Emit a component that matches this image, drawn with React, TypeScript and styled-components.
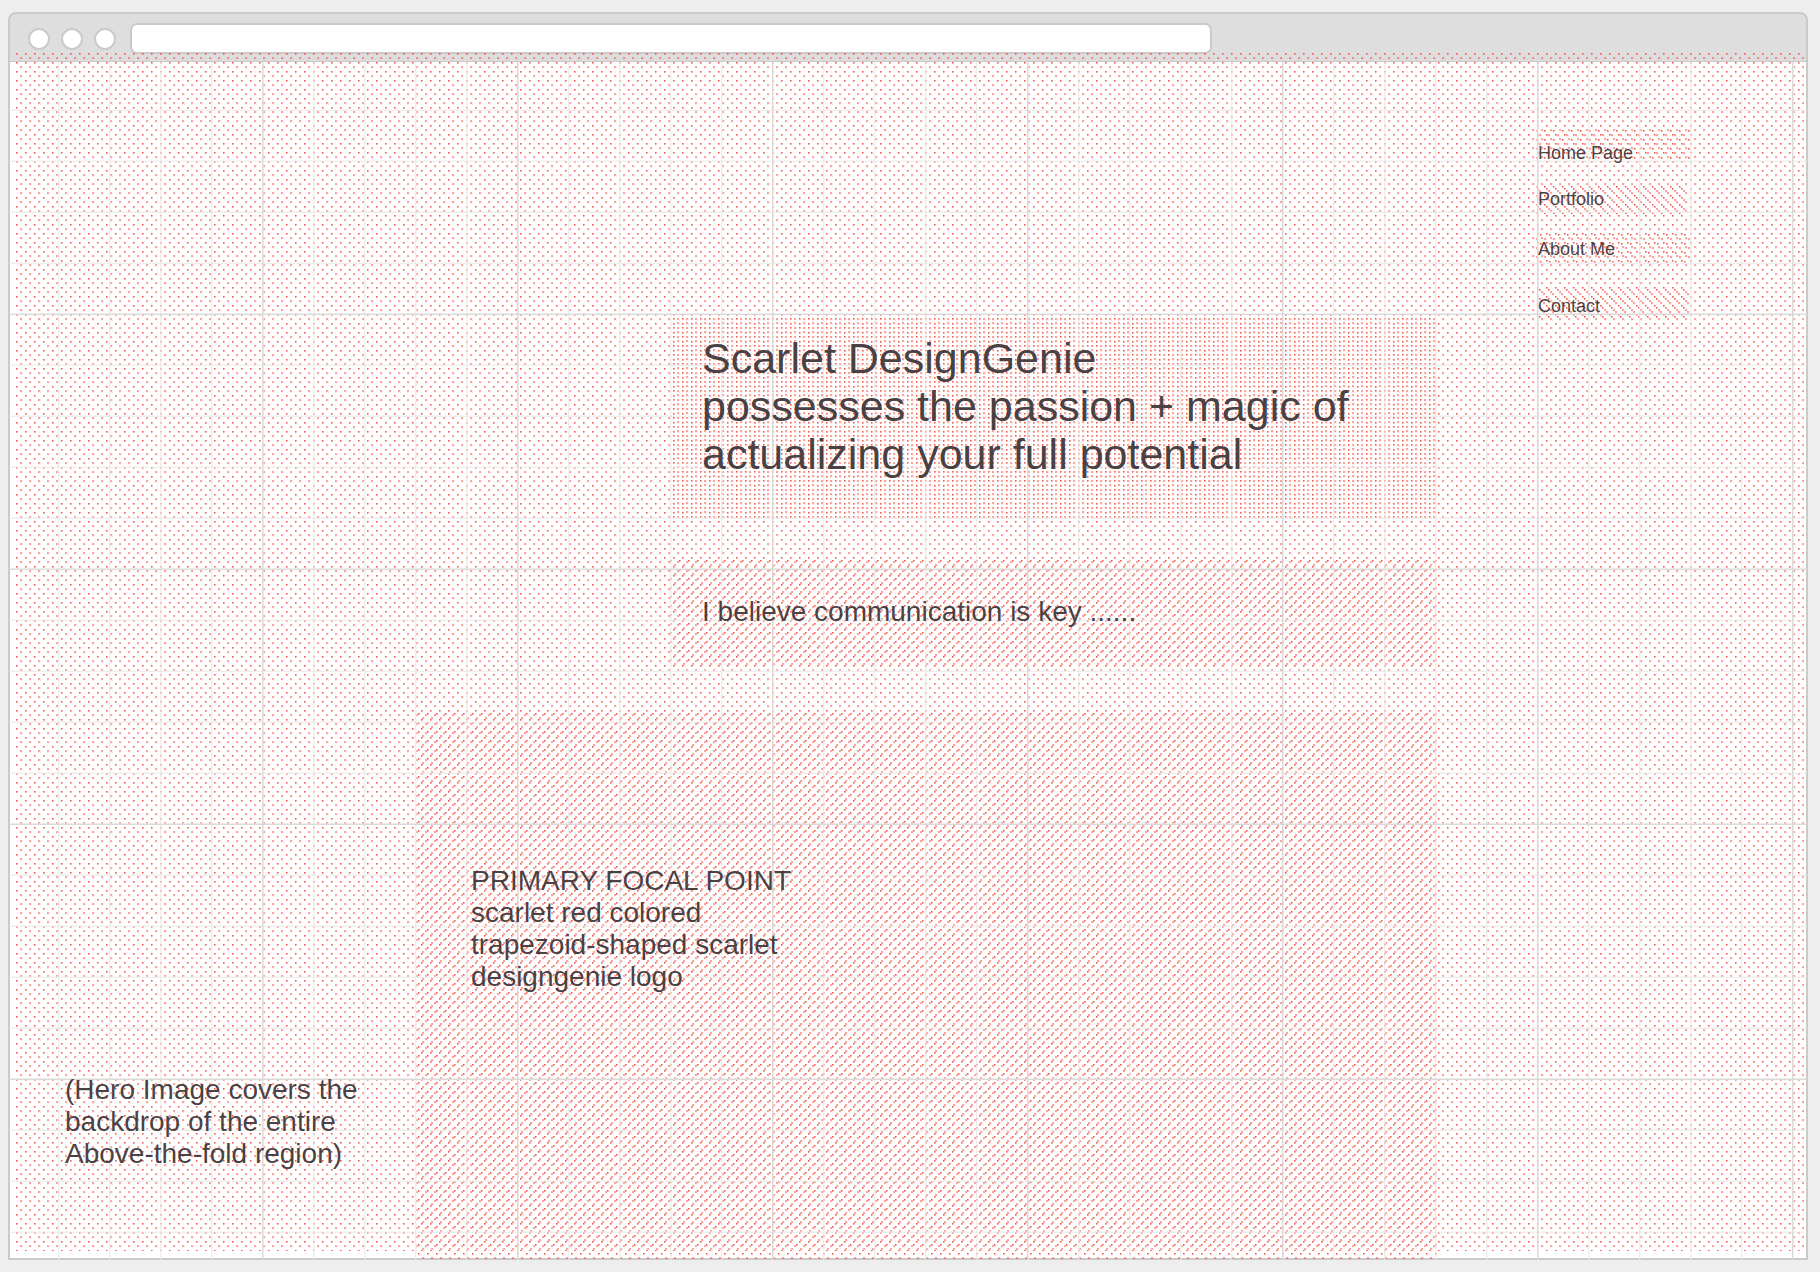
import React from "react";
import styled, { createGlobalStyle, css } from "styled-components";

const GlobalStyle = createGlobalStyle`
  *, *::before, *::after { box-sizing: border-box; }
  html, body { margin: 0; padding: 0; }
  body {
    background: #eeeeee;
    color: rgba(62, 54, 56, 0.94);
    font-family: "Liberation Sans", Arial, sans-serif;
  }
`;

/* Spots of the screen tone inside a 9px tile: alpha, left, top, size */
const spots = [
  [0.85, 0, 0, 1],
  [0.45, 1, 0, 1],
  [0.5, 0, 1, 1],
  [0.3, 1, 1, 1],
  [0.4, 4, 4, 2],
  [0.07, 4, 4, 3],
];

/* Tiles are anchored to the window, so overlapping tones keep their phase */
const tone = (x: number, y: number) => {
  const rects = spots
    .map(
      ([alpha, left, top, size]) =>
        `<rect x='${left}' y='${top}' width='${size}' height='${size}' fill='rgba(240,58,40,${alpha})'/>`
    )
    .join("");
  const svg = `<svg xmlns='http://www.w3.org/2000/svg' width='9' height='9' shape-rendering='crispEdges'>${rects}</svg>`;
  return css`
    background-image: url("data:image/svg+xml,${encodeURIComponent(svg)}");
    background-size: 9px 9px;
    background-position: ${7 + x}px ${8 + y}px;
    background-attachment: fixed;
  `;
};

const Browser = styled.div`
  display: flex;
  flex-direction: column;
  min-height: calc(100vh - 24px);
  margin: 12px 12px 12px 8px;
`;

const Toolbar = styled.header`
  display: flex;
  align-items: center;
  gap: 11px;
  height: 50px;
  padding: 3px 18px 0;
  background: #dedede;
  border: 2px solid #cacaca;
  border-bottom-width: 1px;
  border-radius: 8px 8px 0 0;
`;

const WindowButton = styled.button`
  flex: none;
  width: 22px;
  height: 22px;
  padding: 0;
  background: #ffffff;
  border: 2px solid #cacaca;
  border-radius: 50%;
`;

const AddressBar = styled.input`
  width: 61.5%;
  height: 31px;
  margin: 0 0 2px 3px;
  padding: 0 12px;
  background: #ffffff;
  border: 2px solid #cacaca;
  border-radius: 7px;
  font: inherit;
  font-size: 18px;
  outline: none;
`;

const Viewport = styled.div`
  position: relative;
  flex: 1;
  display: grid;
  grid-template-columns: 407fr 1020fr 369fr;
  background: #ffffff;
  border: 2px solid #cacaca;
  border-top: 0;

  &::before {
    content: "";
    position: absolute;
    inset: -9px 2px 7px 6px;
    ${tone(0, 0)}
    pointer-events: none;
  }

  &::after {
    content: "";
    position: absolute;
    inset: 0 -1px -2px -1px;
    background-image:
      linear-gradient(90deg, rgba(212, 212, 212, 0.75) 1px, rgba(220, 220, 220, 0.4) 1px 2px, transparent 2px),
      linear-gradient(rgba(220, 220, 220, 0.4) 1px, rgba(212, 212, 212, 0.75) 1px 2px, transparent 2px),
      linear-gradient(90deg, rgba(232, 232, 232, 0.7) 1px, rgba(236, 236, 236, 0.4) 1px 2px, transparent 2px),
      linear-gradient(rgba(236, 236, 236, 0.4) 1px, rgba(232, 232, 232, 0.7) 1px 2px, transparent 2px);
    background-size: 255px 255px, 255px 255px, 51px 51px, 51px 51px;
    background-position: 7px 0, 0 58px, 7px 0, 0 7px;
    background-attachment: fixed;
    pointer-events: none;
  }
`;

const Text = styled.p`
  position: relative;
  z-index: 1;
  margin: 0;
  font-size: 28px;
  line-height: 32px;
`;

const Backdrop = styled.aside`
  display: flex;
  align-items: flex-end;
  padding: 0 40px 88px 55px;
`;

const Center = styled.main`
  position: relative;
  display: flex;
  flex-direction: column;
  padding-top: 254px;
`;

const Headline = styled.section`
  min-height: 203px;
  margin-left: 253px;
  padding: 18px 32px;
  ${tone(0, 4)}
`;

const Title = styled.h1`
  position: relative;
  z-index: 1;
  margin: 0;
  font-size: 43px;
  font-weight: 400;
  line-height: 48px;
`;

const Tagline = styled.section`
  min-height: 108px;
  margin: 40px 0 46px 252px;
  padding: 37px 33px;
  ${tone(6, 3)}
`;

const FocalPoint = styled.section`
  flex: 1;
  margin-bottom: -2px;
  padding: 152px 54px;
  ${tone(6, 3)}
`;

const Nav = styled.nav`
  position: relative;
  display: flex;
  flex-direction: column;
  align-items: flex-start;
  padding: 68px 0 0 99px;
`;

interface NavItem {
  label: string;
  shift: [number, number];
  width: number;
  height: number;
  gap: number;
  inset: number;
}

const NavLink = styled.a<{ $item: NavItem }>`
  width: ${(p) => p.$item.width}px;
  height: ${(p) => p.$item.height}px;
  margin-top: ${(p) => p.$item.gap}px;
  padding: ${(p) => p.$item.inset}px 0 0 2px;
  color: inherit;
  font-size: 18px;
  line-height: 20px;
  text-decoration: none;
  ${(p) => tone(p.$item.shift[0], p.$item.shift[1])}

  span {
    position: relative;
    z-index: 1;
  }
`;

const navItems: NavItem[] = [
  { label: "Home Page", shift: [-2, -4], width: 154, height: 32, gap: 0, inset: 13 },
  { label: "Portfolio", shift: [-2, -2], width: 150, height: 30, gap: 22, inset: 5 },
  { label: "About Me", shift: [3, 1], width: 154, height: 30, gap: 20, inset: 5 },
  { label: "Contact", shift: [2, 2], width: 154, height: 32, gap: 24, inset: 8 },
];

export default function App() {
  return (
    <>
      <GlobalStyle />
      <Browser>
        <Toolbar>
          <WindowButton aria-label="Close" />
          <WindowButton aria-label="Minimize" />
          <WindowButton aria-label="Maximize" />
          <AddressBar type="text" aria-label="Address" />
        </Toolbar>
        <Viewport>
          <Backdrop>
            <Text>
              (Hero Image covers the
              <br />
              backdrop of the entire
              <br />
              Above-the-fold region)
            </Text>
          </Backdrop>
          <Center>
            <Headline>
              <Title>
                Scarlet DesignGenie
                <br />
                possesses the passion + magic of
                <br />
                actualizing your full potential
              </Title>
            </Headline>
            <Tagline>
              <Text>I believe communication is key ......</Text>
            </Tagline>
            <FocalPoint>
              <Text>
                PRIMARY FOCAL POINT
                <br />
                scarlet red colored
                <br />
                trapezoid-shaped scarlet
                <br />
                designgenie logo
              </Text>
            </FocalPoint>
          </Center>
          <Nav aria-label="Main">
            {navItems.map((item) => (
              <NavLink key={item.label} href="#" $item={item}>
                <span>{item.label}</span>
              </NavLink>
            ))}
          </Nav>
        </Viewport>
      </Browser>
    </>
  );
}
